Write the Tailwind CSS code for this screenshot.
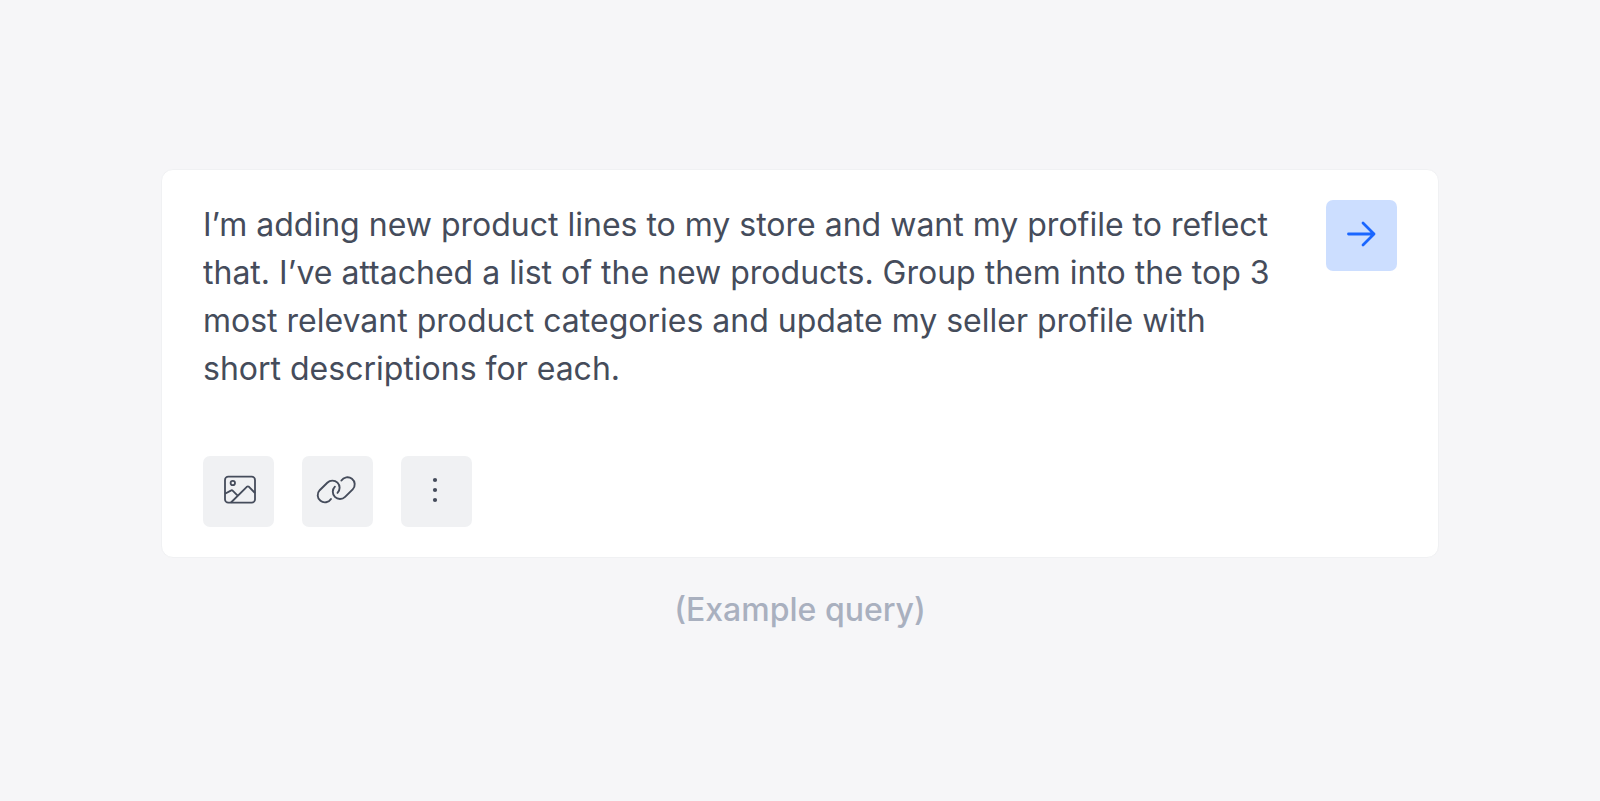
<!DOCTYPE html>
<html lang="en">
<head>
    <meta charset="UTF-8">
    <meta name="viewport" content="width=device-width, initial-scale=1.0">
    <title>Example query</title>
    <script src="https://cdn.jsdelivr.net/npm/@tailwindcss/browser@4"></script>
</head>
<body class="bg-[#f6f6f8] font-[Inter,sans-serif] [font-optical-sizing:none] text-[32px] leading-12 min-h-screen flex flex-col items-center justify-center gap-7 px-4 pt-0.5">
    <form class="w-full max-w-[1278px] bg-white border border-[#f0f1f3] rounded-xl px-[41px] py-[30px] flex flex-col gap-[63px]">
        <div class="flex items-start gap-10">
            <textarea aria-label="Query" rows="4" class="block flex-1 min-w-0 pt-px resize-none overflow-hidden outline-none text-[#454c5b]">I’m adding new product lines to my store and want my profile to reflect that. I’ve attached a list of the new products. Group them into the top 3 most relevant product categories and update my seller profile with short descriptions for each.</textarea>
            <button type="submit" aria-label="Send" class="size-[71px] shrink-0 rounded-[7px] bg-[#ccdeff] text-[#1a66ff]">
                <svg viewBox="0 0 71 71" class="size-full" fill="none" stroke="currentColor" stroke-width="2.8" stroke-linecap="round" stroke-linejoin="round">
                    <path d="M22.5 34H48M37 23L48 34L37 45" />
                </svg>
            </button>
        </div>
        <!-- Attachments -->
        <div class="flex gap-7 text-[#454c5b]">
            <button type="button" aria-label="Add image" class="size-[71px] rounded-[7px] bg-[#f0f1f3]">
                <svg viewBox="0 0 71 71" class="size-full" fill="none" stroke="currentColor" stroke-width="1.8" stroke-linejoin="round">
                    <rect x="22" y="20.7" width="30" height="26" rx="3.3" />
                    <circle cx="29.8" cy="27" r="2.2" />
                    <path d="M22 37.8L27.8 34.6Q28.9 33.8 29.9 34.8L34.6 39.6M28 46.5L43.8 30.8Q44.9 29.9 46 30.8L52 37" />
                </svg>
            </button>
            <button type="button" aria-label="Add link" class="size-[71px] rounded-[7px] bg-[#f0f1f3]">
                <svg viewBox="0 0 71 71" class="size-full" fill="none" stroke="currentColor" stroke-width="1.9" stroke-linecap="round">
                    <path d="M29 43A7.2 7.2 0 1 1 17.7 34.2L25.3 26.7A7.2 7.2 0 0 1 35.5 36.9" />
                    <path d="M39.4 24.6A7.2 7.2 0 1 1 50.7 33.4L43.1 40.9A7.2 7.2 0 0 1 32.9 30.7" />
                </svg>
            </button>
            <button type="button" aria-label="More" class="size-[71px] rounded-[7px] bg-[#f0f1f3]">
                <svg viewBox="0 0 71 71" class="size-full" fill="currentColor">
                    <circle cx="34" cy="24" r="2.1" />
                    <circle cx="34" cy="34" r="2.1" />
                    <circle cx="34" cy="44" r="2.1" />
                </svg>
            </button>
        </div>
    </form>
    <p class="font-medium text-[#a9b0bf]">(Example query)</p>
</body>
</html>
